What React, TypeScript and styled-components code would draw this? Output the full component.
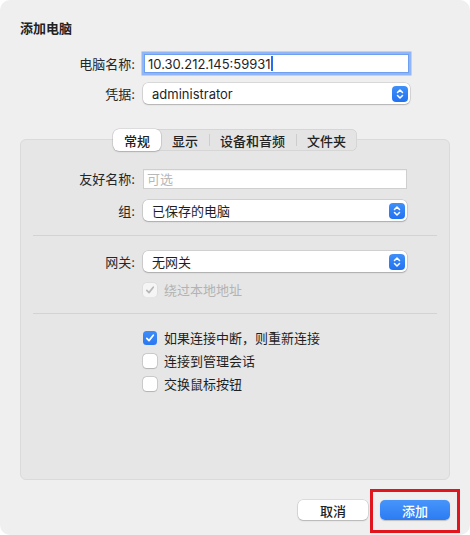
import React from "react";
import styled, { createGlobalStyle } from "styled-components";

const Global = createGlobalStyle`
  html, body { margin: 0; padding: 0; background: #ffffff; }
  body { font-family: "Inter", "Noto Sans CJK SC", "Noto Sans", sans-serif; -webkit-font-smoothing: antialiased; }
  * { box-sizing: border-box; }
`;

const Window = styled.div`
  width: 470px;
  height: 535px;
  background: #efefef;
  border-radius: 10px;
  display: flex;
  flex-direction: column;
  padding: 20px 20px 15px 20px;
  color: #262626;
  font-size: 13px;
`;

const Title = styled.div`
  font-weight: 700;
  font-size: 13px;
  line-height: 16px;
  color: #222;
`;

const Form = styled.div<{ $labelW: number; $ctrlW: number }>`
  display: grid;
  grid-template-columns: ${(p) => p.$labelW}px ${(p) => p.$ctrlW}px;
  column-gap: 8px;
  align-items: center;
`;

const TopForm = styled(Form)`
  margin-top: 18px;
  row-gap: 10px;
`;

const Label = styled.div`
  text-align: right;
  font-size: 13px;
  line-height: 16px;
  color: #262626;
  white-space: nowrap;
`;

const TextInput = styled.div<{ $focused?: boolean }>`
  height: ${(p) => (p.$focused ? 19 : 20)}px;
  margin: ${(p) => (p.$focused ? "0 1px" : "0")};
  background: #ffffff;
  border: 1px solid ${(p) => (p.$focused ? "#6f9ff0" : "#cfcfcf")};
  box-shadow: ${(p) => (p.$focused ? "0 0 0 2.5px #92b5f3" : "inset 0 1px 0 rgba(0,0,0,0.04)")};
  display: flex;
  align-items: center;
  padding-left: 3px;
  font-size: 13px;
  line-height: 16px;
  color: #1f1f1f;
  white-space: nowrap;
`;

const Placeholder = styled.span`
  color: #b8b8b8;
`;

const Caret = styled.span`
  display: inline-block;
  width: 1.5px;
  height: 15px;
  background: #2a6ef0;
  margin-left: 0.5px;
`;

const Popup = styled.div`
  height: 21px;
  background: #ffffff;
  border-radius: 5px;
  box-shadow: 0 0 0 0.5px rgba(0, 0, 0, 0.18), 0 1px 1.5px rgba(0, 0, 0, 0.18);
  display: flex;
  align-items: center;
  justify-content: space-between;
  padding: 0 2px 0 9px;
  font-size: 13px;
  line-height: 16px;
  color: #1f1f1f;
`;

const Stepper = styled.div`
  width: 16px;
  height: 16px;
  border-radius: 4px;
  background: linear-gradient(#3f8ff9, #2172f1);
  display: flex;
  align-items: center;
  justify-content: center;
`;

const TabsArea = styled.div`
  margin-top: 25px;
  flex: 1;
  display: flex;
  flex-direction: column;
  align-items: center;
`;

const TabBar = styled.div`
  position: relative;
  z-index: 1;
  height: 22px;
  display: flex;
  align-items: stretch;
  background: #e4e4e4;
  border-radius: 6px;
  box-shadow: inset 0 0 0 0.5px rgba(0, 0, 0, 0.12);
`;

const Tab = styled.div<{ $active?: boolean; $sep?: boolean }>`
  position: relative;
  display: flex;
  align-items: center;
  padding: 0 11px;
  font-size: 13px;
  font-weight: 500;
  color: #222;
  border-radius: 6px;
  background: ${(p) => (p.$active ? "#ffffff" : "transparent")};
  box-shadow: ${(p) => (p.$active ? "0 0 0 0.5px rgba(0,0,0,0.15), 0 1px 1.5px rgba(0,0,0,0.18)" : "none")};
  &::before {
    content: "";
    display: ${(p) => (p.$sep ? "block" : "none")};
    position: absolute;
    left: 0;
    top: 5px;
    bottom: 5px;
    width: 1px;
    background: #cdcdcd;
  }
`;

const Box = styled.div`
  align-self: stretch;
  flex: 1;
  margin-top: -12px;
  background: #e6e6e6;
  border: 1px solid #dadada;
  border-radius: 6px;
  padding-top: 29px;
  display: flex;
  flex-direction: column;
`;

const BoxForm = styled(Form)`
  row-gap: 11px;
`;

const Separator = styled.div<{ $top: number; $bottom: number }>`
  height: 1px;
  background: #d3d3d3;
  margin: ${(p) => p.$top}px 12px ${(p) => p.$bottom}px 12px;
`;

const CheckList = styled.div<{ $top?: number }>`
  display: flex;
  flex-direction: column;
  gap: 8px;
  padding-left: 122px;
  margin-top: ${(p) => p.$top ?? 0}px;
`;

const CheckRow = styled.div<{ $disabled?: boolean }>`
  display: flex;
  align-items: center;
  gap: 7px;
  height: 15px;
  font-size: 13px;
  line-height: 16px;
  color: ${(p) => (p.$disabled ? "#b3b3b3" : "#1f1f1f")};
`;

const CheckBox = styled.div<{ $checked?: boolean; $disabled?: boolean }>`
  width: 14px;
  height: 14px;
  border-radius: 3.5px;
  display: flex;
  align-items: center;
  justify-content: center;
  background: ${(p) => (p.$checked && !p.$disabled ? "linear-gradient(#3d8cf8,#2a78f2)" : "#ffffff")};
  box-shadow: ${(p) =>
    p.$checked && !p.$disabled
      ? "none"
      : p.$disabled
      ? "0 0 0 0.5px rgba(0,0,0,0.1)"
      : "0 0 0 0.5px rgba(0,0,0,0.22), 0 0.5px 1px rgba(0,0,0,0.12)"};
  opacity: ${(p) => (p.$disabled ? 0.6 : 1)};
`;

const Footer = styled.div`
  margin-top: 20px;
  display: flex;
  justify-content: flex-end;
  gap: 12px;
`;

const Button = styled.div<{ $primary?: boolean }>`
  position: relative;
  width: 70px;
  height: 20px;
  border-radius: 5px;
  display: flex;
  align-items: center;
  justify-content: center;
  font-size: 13px;
  font-weight: 500;
  color: ${(p) => (p.$primary ? "#ffffff" : "#222")};
  background: ${(p) => (p.$primary ? "linear-gradient(#4795fa, #2c7bf3)" : "#ffffff")};
  box-shadow: ${(p) =>
    p.$primary ? "0 0.5px 1px rgba(0,0,0,0.2)" : "0 0 0 0.5px rgba(0,0,0,0.16), 0 1px 1.5px rgba(0,0,0,0.18)"};
`;

const Highlight = styled.div`
  position: absolute;
  left: -10px;
  right: -10px;
  top: -11px;
  bottom: -13px;
  border: 3px solid #e0151d;
  pointer-events: none;
`;

const StepperIcon = () => (
  <Stepper>
    <svg width="10" height="12" viewBox="0 0 10 12" fill="none">
      <path d="M2.5 4.5 L5 2 L7.5 4.5" stroke="#fff" strokeWidth="1.5" strokeLinecap="round" strokeLinejoin="round" />
      <path d="M2.5 7.5 L5 10 L7.5 7.5" stroke="#fff" strokeWidth="1.5" strokeLinecap="round" strokeLinejoin="round" />
    </svg>
  </Stepper>
);

const Check = ({ color }: { color: string }) => (
  <svg width="10" height="10" viewBox="0 0 10 10" fill="none">
    <path d="M1.8 5.3 L4 7.6 L8.3 2.2" stroke={color} strokeWidth="1.7" strokeLinecap="round" strokeLinejoin="round" />
  </svg>
);

export default function App() {
  return (
    <>
      <Global />
      <Window>
        <Title>添加电脑</Title>
        <TopForm $labelW={115} $ctrlW={267}>
          <Label>电脑名称:</Label>
          <TextInput $focused>
            10.30.212.145:59931
            <Caret />
          </TextInput>
          <Label>凭据:</Label>
          <Popup>
            <span>administrator</span>
            <StepperIcon />
          </Popup>
        </TopForm>
        <TabsArea>
          <TabBar>
            <Tab $active>常规</Tab>
            <Tab>显示</Tab>
            <Tab $sep>设备和音频</Tab>
            <Tab $sep>文件夹</Tab>
          </TabBar>
          <Box>
            <BoxForm $labelW={114} $ctrlW={264}>
              <Label>友好名称:</Label>
              <TextInput>
                <Placeholder>可选</Placeholder>
              </TextInput>
              <Label>组:</Label>
              <Popup>
                <span>已保存的电脑</span>
                <StepperIcon />
              </Popup>
            </BoxForm>
            <Separator $top={14} $bottom={15} />
            <BoxForm $labelW={114} $ctrlW={264}>
              <Label>网关:</Label>
              <Popup>
                <span>无网关</span>
                <StepperIcon />
              </Popup>
            </BoxForm>
            <CheckList $top={10}>
              <CheckRow $disabled>
                <CheckBox $checked $disabled>
                  <Check color="#9a9a9a" />
                </CheckBox>
                绕过本地地址
              </CheckRow>
            </CheckList>
            <Separator $top={16} $bottom={16} />
            <CheckList>
              <CheckRow>
                <CheckBox $checked>
                  <Check color="#ffffff" />
                </CheckBox>
                如果连接中断，则重新连接
              </CheckRow>
              <CheckRow>
                <CheckBox />
                连接到管理会话
              </CheckRow>
              <CheckRow>
                <CheckBox />
                交换鼠标按钮
              </CheckRow>
            </CheckList>
          </Box>
        </TabsArea>
        <Footer>
          <Button>取消</Button>
          <Button $primary>
            添加
            <Highlight />
          </Button>
        </Footer>
      </Window>
    </>
  );
}
